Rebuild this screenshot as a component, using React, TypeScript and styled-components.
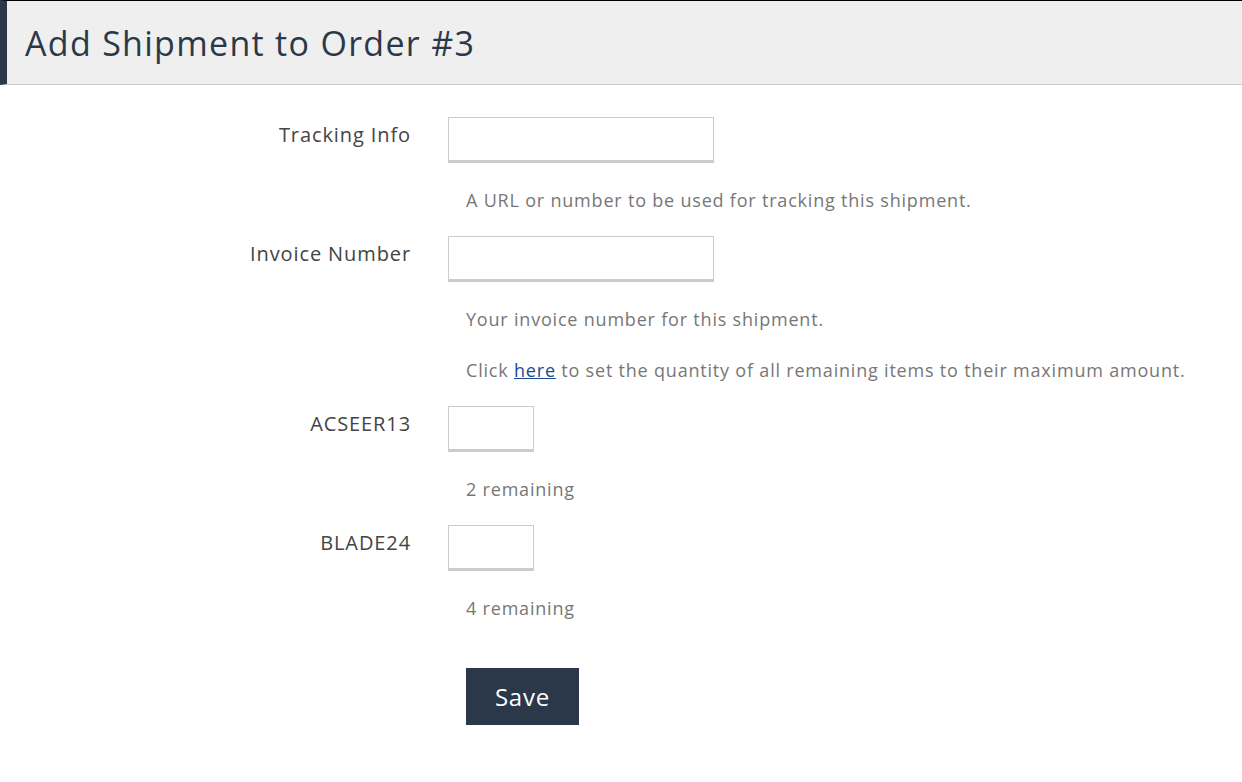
import React from "react";
import styled, { createGlobalStyle } from "styled-components";

const GlobalStyle = createGlobalStyle`
    body {
        margin: 0;
        background: #ffffff;
        font-family: "Open Sans", Lato, sans-serif;
    }
`

const Header = styled.header`
    height: 83px;
    display: flex;
    align-items: center;
    background: #efefef;
    border-top: 1px solid #000000;
    border-left: 7px solid #2b3849;
    border-bottom: 1px solid #cccccc;
    padding-left: 18px;
`

const Title = styled.h1`
    margin: 0;
    font-size: 34px;
    font-weight: 400;
    letter-spacing: 1.3px;
    color: #2b3849;
`

const Form = styled.form`
    padding-top: 32px;
    display: flex;
    flex-direction: column;
`

const FieldRow = styled.div`
    display: flex;
    align-items: flex-start;
    gap: 37px;
`

const Label = styled.label`
    width: 411px;
    text-align: right;
    font-size: 20px;
    letter-spacing: 0.9px;
    color: #444444;
    padding-top: 4px;
`

const TextInput = styled.input<{ $small?: boolean }>`
    box-sizing: border-box;
    width: ${(p) => (p.$small ? "86px" : "266px")};
    height: 46px;
    border: 1px solid #cccccc;
    border-bottom: 3px solid #cccccc;
    background: #ffffff;
    outline: none;
`

const Help = styled.p`
    margin: 25px 0 24px 466px;
    font-size: 18px;
    line-height: 24px;
    letter-spacing: 0.8px;
    color: #777777;
`

const HelpLink = styled.a`
    color: #1a4a94;
    text-decoration: underline;
`

const SaveButton = styled.button`
    margin: 24px 0 0 466px;
    width: 113px;
    height: 57px;
    border: none;
    background: #2b3849;
    color: #ffffff;
    font-family: "Open Sans", Lato, sans-serif;
    font-size: 24px;
    letter-spacing: 0.8px;
    cursor: pointer;
`

const items = [
    { sku: "ACSEER13", remaining: 2 },
    { sku: "BLADE24", remaining: 4 },
];

const App = () => {
    return (
        <>
            <GlobalStyle />
            <Header>
                <Title>Add Shipment to Order #3</Title>
            </Header>
            <Form onSubmit={(e) => e.preventDefault()}>
                <FieldRow>
                    <Label>Tracking Info</Label>
                    <TextInput type="text" />
                </FieldRow>
                <Help>A URL or number to be used for tracking this shipment.</Help>
                <FieldRow>
                    <Label>Invoice Number</Label>
                    <TextInput type="text" />
                </FieldRow>
                <Help>Your invoice number for this shipment.</Help>
                <Help style={{ marginTop: 3 }}>
                    Click <HelpLink href="#">here</HelpLink> to set the quantity of all remaining items to their maximum amount.
                </Help>
                {items.map((item) => (
                    <React.Fragment key={item.sku}>
                        <FieldRow>
                            <Label>{item.sku}</Label>
                            <TextInput type="text" $small />
                        </FieldRow>
                        <Help>{item.remaining} remaining</Help>
                    </React.Fragment>
                ))}
                <SaveButton type="submit">Save</SaveButton>
            </Form>
        </>
    );
};

export default App;
